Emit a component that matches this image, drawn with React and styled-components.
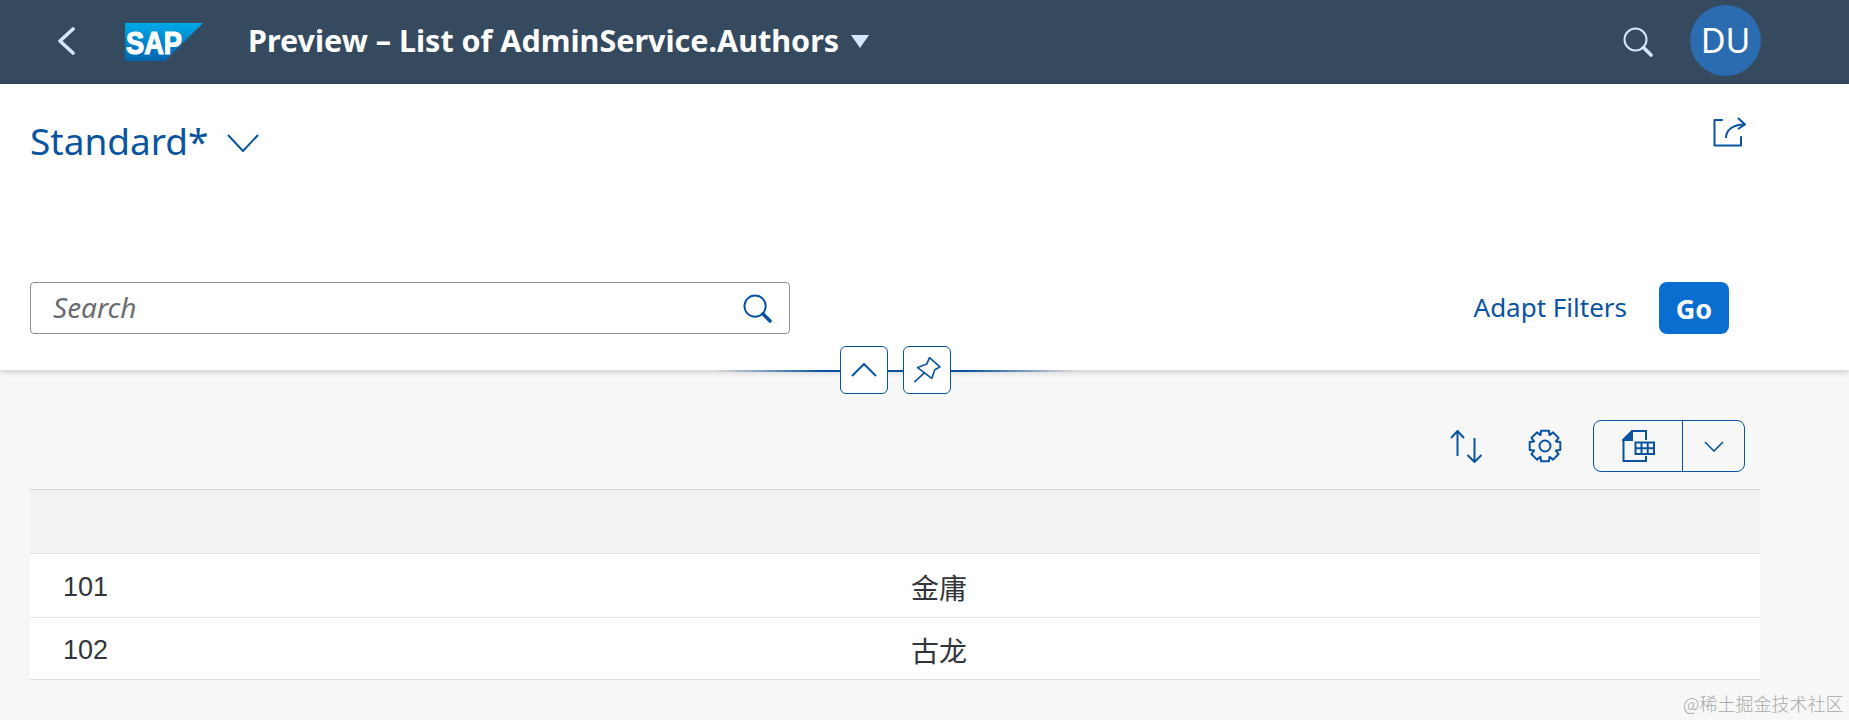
import styled, { createGlobalStyle } from "styled-components";

const GlobalStyle = createGlobalStyle`
  html, body {
    margin: 0;
    height: 720px;
    overflow: hidden;
    background: #f7f7f7;
    font-family: "Noto Sans", "Noto Sans CJK SC", sans-serif;
  }
  * { box-sizing: border-box; }
`;

function SearchIcon({ color, size }) {
  return (
    <svg width={size} height={size} viewBox="0 0 30 30" fill="none" stroke={color}>
      <circle cx="12.5" cy="12.5" r="11" strokeWidth="2" />
      <line x1="20.5" y1="20.5" x2="28" y2="28" strokeWidth="3.6" strokeLinecap="round" />
    </svg>
  );
}

function SapLogo() {
  return (
    <svg width="79" height="38" viewBox="0 0 79 38">
      <defs>
        <linearGradient id="sapGrad" x1="0" y1="0" x2="0" y2="1">
          <stop offset="0" stopColor="#00a9e8" />
          <stop offset="1" stopColor="#0063ac" />
        </linearGradient>
      </defs>
      <polygon points="0,0 78,0 40,38 0,38" fill="url(#sapGrad)" />
      <text x="1" y="31" fontFamily="Liberation Sans" fontWeight="700" fontSize="32" fill="#fff" stroke="#fff" strokeWidth="1.2" textLength="56" lengthAdjust="spacingAndGlyphs">SAP</text>
    </svg>
  );
}

// 8 tooth gear outline, center 17,17
function gearPath() {
  const points = [];
  for (let i = 0; i < 8; i++) {
    const a = (i * Math.PI) / 4;
    [[-0.39, 11.8], [-0.25, 15.8], [0.25, 15.8], [0.39, 11.8]].forEach(([da, r]) => {
      points.push((17 + r * Math.sin(a + da)).toFixed(2) + " " + (17 - r * Math.cos(a + da)).toFixed(2));
    });
  }
  return "M" + points.join(" L") + " Z";
}

export default function App() {
  return (
    <>
      <GlobalStyle />
      <ShellBar>
        <BackIcon width="18" height="28" viewBox="0 0 18 28" fill="none">
          <polyline points="16,2 3,14 16,26" stroke="#d1e8ff" strokeWidth="3.6" strokeLinecap="round" strokeLinejoin="round" />
        </BackIcon>
        <LogoSlot><SapLogo /></LogoSlot>
        <Title>Preview – List of AdminService.Authors</Title>
        <TitleCaret width="18" height="13" viewBox="0 0 18 13">
          <polygon points="0,0 18,0 9,13" fill="#d1e8ff" />
        </TitleCaret>
        <Spacer />
        <SearchIcon color="#d1e8ff" size={30} />
        <Avatar>DU</Avatar>
      </ShellBar>

      <FilterPanel>
        <TopRow>
          <Variant>Standard*</Variant>
          <VariantCaret width="32" height="18" viewBox="0 0 32 18" fill="none">
            <polyline points="1,1 16,17 31,1" stroke="#0854a0" strokeWidth="2" />
          </VariantCaret>
          <Spacer />
          <ShareIcon width="33" height="30" viewBox="0 0 33 30" fill="none" stroke="#0854a0" strokeWidth="2">
            <path d="M9 3 H1.5 V28.5 H28 V20" strokeLinecap="round" strokeLinejoin="round" />
            <path d="M13 21 C13 13 20 7.5 31 7.5" />
            <polyline points="25,1 32,7.5 25,12" />
          </ShareIcon>
        </TopRow>
        <FilterRow>
          <SearchField>
            <Placeholder>Search</Placeholder>
            <SearchIcon color="#0854a0" size={29} />
          </SearchField>
          <Spacer />
          <AdaptFilters>Adapt Filters</AdaptFilters>
          <GoButton>Go</GoButton>
        </FilterRow>
      </FilterPanel>

      <CollapseRow>
        <CollapseButton>
          <svg width="26" height="14" viewBox="0 0 26 14" fill="none">
            <polyline points="1,13 13,1 25,13" stroke="#0854a0" strokeWidth="2" />
          </svg>
        </CollapseButton>
        <CollapseButton>
          <svg width="28" height="28" viewBox="640 255 85 85" fill="none" stroke="#0854a0" strokeWidth="5" strokeLinejoin="round">
            <path d="M690 260 L722 288 L706 297 L697 323 L654 290 L682 279 Z" />
            <line x1="644" y1="334" x2="676" y2="305" />
          </svg>
        </CollapseButton>
      </CollapseRow>

      <Content>
        <Toolbar>
          <svg width="34" height="33" viewBox="0 0 34 33" fill="none" stroke="#0854a0" strokeWidth="2">
            <path d="M7.5 1 V26 M1 8 L7.5 1 L14 8" />
            <path d="M24.5 8 V32 M17.5 25 L24.5 32 L31.5 25" />
          </svg>
          <GearSlot>
            <svg width="34" height="34" viewBox="0 0 34 34" fill="none" stroke="#0854a0" strokeWidth="2" strokeLinejoin="round">
              <path d={gearPath()} />
              <circle cx="17" cy="17" r="5.5" />
            </svg>
          </GearSlot>
          <ViewGroup>
            <ViewMain>
              <svg width="33" height="32" viewBox="0 0 33 32" fill="none" stroke="#0854a0" strokeWidth="2">
                <path d="M10 1 H24 V10" />
                <path d="M1.5 11 V31 H24 V26" />
                <path d="M1 10 L10 1 V10 Z" fill="#0854a0" />
                <path d="M13.5 12.5 H32 V24 H13.5 Z M19.5 12.5 V24 M25.7 12.5 V24 M13.5 18.2 H32" />
              </svg>
            </ViewMain>
            <ViewArrow>
              <svg width="20" height="11" viewBox="0 0 20 11" fill="none">
                <polyline points="1,1 10,10 19,1" stroke="#0854a0" strokeWidth="1.6" />
              </svg>
            </ViewArrow>
          </ViewGroup>
        </Toolbar>
        <TableHead />
        <Row $height={65}>
          <Cell>101</Cell>
          <NameCell>金庸</NameCell>
        </Row>
        <Row $height={63}>
          <Cell>102</Cell>
          <NameCell>古龙</NameCell>
        </Row>
      </Content>

      <Watermark>@稀土掘金技术社区</Watermark>
    </>
  );
}

const ShellBar = styled.header`
  height: 84px;
  background: #354a5f;
  display: flex;
  align-items: center;
  padding-left: 57px;
  padding-right: 88px;
`;

const BackIcon = styled.svg`
  flex: none;
  margin-top: -3px;
`;

const LogoSlot = styled.div`
  margin-left: 50px;
  margin-right: 44px;
  height: 38px;
`;

const Title = styled.div`
  color: #fff;
  font-size: 30.5px;
  font-weight: 700;
  white-space: nowrap;
  margin-top: -4px;
`;

const TitleCaret = styled.svg`
  margin-left: 12px;
  margin-top: -2px;
`;

const Spacer = styled.div`
  flex: 1;
`;

const Avatar = styled.div`
  width: 71px;
  height: 71px;
  margin-left: 37px;
  margin-top: -3px;
  padding-bottom: 2px;
  border-radius: 50%;
  background: #2b6cb0;
  color: #fff;
  font-size: 34px;
  display: flex;
  align-items: center;
  justify-content: center;
`;

const FilterPanel = styled.section`
  height: 286px;
  background: #fff;
  box-shadow: 0 2px 6px rgba(0, 0, 0, 0.18);
  padding: 32px 0 0 30px;
  display: flex;
  flex-direction: column;
`;

const TopRow = styled.div`
  display: flex;
  align-items: center;
  padding-right: 103px;
  height: 38px;
`;

const Variant = styled.div`
  color: #0854a0;
  font-size: 37px;
  line-height: 38px;
  margin-top: 11px;
`;

const VariantCaret = styled.svg`
  margin-left: 18px;
  margin-top: 15px;
`;

const ShareIcon = styled.svg`
  margin-top: -6px;
`;

const FilterRow = styled.div`
  margin-top: 128px;
  display: flex;
  align-items: center;
  padding-right: 120px;
`;

const SearchField = styled.div`
  width: 760px;
  height: 52px;
  border: 1px solid #89919a;
  border-radius: 4px;
  display: flex;
  align-items: center;
  justify-content: space-between;
  padding: 0 17px 0 22px;
`;

const Placeholder = styled.span`
  color: #6a6d70;
  font-size: 28px;
  font-style: italic;
  margin-top: -2px;
`;

const AdaptFilters = styled.span`
  color: #0854a0;
  font-size: 26px;
  margin-top: -2px;
`;

const GoButton = styled.div`
  width: 70px;
  height: 52px;
  margin-left: 32px;
  border-radius: 8px;
  background: #0a6ed1;
  color: #fff;
  font-size: 27px;
  font-weight: 700;
  display: flex;
  align-items: center;
  justify-content: center;
`;

const CollapseRow = styled.div`
  width: 1730px;
  height: 48px;
  margin: -24px 0 0 30px;
  position: relative;
  display: flex;
  align-items: center;
  justify-content: center;
  gap: 15px;
  &::before {
    content: "";
    position: absolute;
    left: 685px;
    width: 360px;
    top: 24px;
    height: 2px;
    background: linear-gradient(90deg, rgba(8, 84, 160, 0), #0854a0 30%, #0854a0 70%, rgba(8, 84, 160, 0));
  }
`;

const CollapseButton = styled.div`
  position: relative;
  width: 48px;
  height: 48px;
  background: #fff;
  border: 1.5px solid #0854a0;
  border-radius: 6px;
  display: flex;
  align-items: center;
  justify-content: center;
`;

const Content = styled.main`
  width: 1730px;
  margin: 26px 0 0 30px;
`;

const Toolbar = styled.div`
  height: 52px;
  display: flex;
  align-items: center;
  justify-content: flex-end;
  padding-right: 15px;
`;

const GearSlot = styled.div`
  display: flex;
  margin: 0 31px 0 44px;
`;

const ViewGroup = styled.div`
  width: 152px;
  height: 52px;
  border: 1.5px solid #0854a0;
  border-radius: 8px;
  display: flex;
`;

const ViewMain = styled.div`
  width: 89px;
  border-right: 1.5px solid #0854a0;
  display: flex;
  align-items: center;
  justify-content: center;
`;

const ViewArrow = styled.div`
  flex: 1;
  display: flex;
  align-items: center;
  justify-content: center;
`;

const TableHead = styled.div`
  height: 64px;
  margin-top: 17px;
  background: #f2f2f2;
  border-top: 1px solid #d9d9d9;
`;

const Row = styled.div`
  height: ${(p) => p.$height}px;
  background: #fff;
  border-top: 1px solid #e5e5e5;
  border-bottom: 1px solid #e0e0e0;
  margin-bottom: -1px;
  display: grid;
  grid-template-columns: 848px 1fr;
  align-items: center;
  color: #32363a;
  padding-left: 33px;
`;

const Cell = styled.div`
  font-family: "Liberation Sans", sans-serif;
  font-size: 27px;
  padding-top: 3px;
`;

const NameCell = styled.div`
  font-family: "Liberation Sans", "Noto Sans CJK SC", sans-serif;
  font-size: 28px;
  padding-top: 3px;
`;

const Watermark = styled.div`
  position: absolute;
  left: 1683px;
  top: 692px;
  color: #a9a9a9;
  font-family: "Noto Sans CJK SC", sans-serif;
  font-weight: 300;
  font-size: 18px;
  line-height: 22px;
  white-space: nowrap;
`;
